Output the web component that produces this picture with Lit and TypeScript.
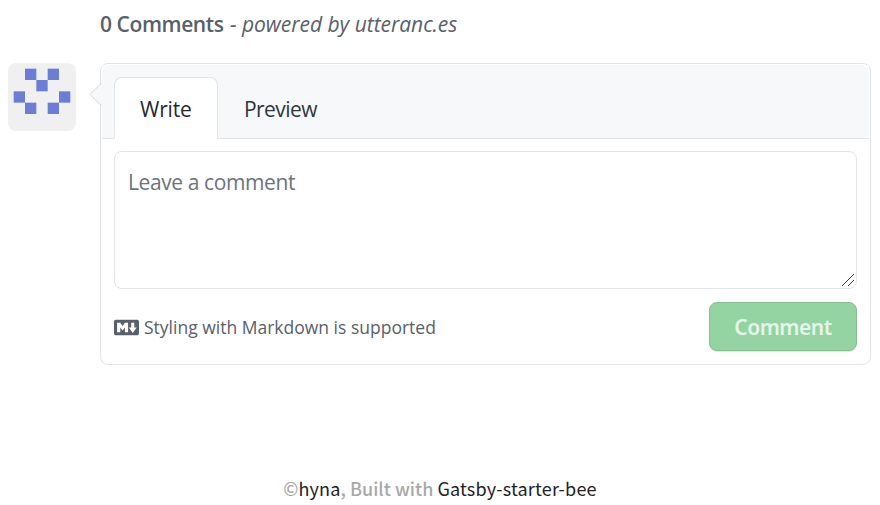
import { LitElement, html, css, svg } from "lit";
import { customElement } from "lit/decorators.js";

const CELLS = [[1, 0], [3, 0], [2, 1], [0, 2], [4, 2], [1, 3], [3, 3]];

@customElement("user-avatar")
class UserAvatar extends LitElement {
  static styles = css`
    :host { display: block; width: 68px; height: 68px; border-radius: 8px; overflow: hidden; background: #f0f0f0; }
    svg { display: block; }
  `;
  render() {
    return html`<svg width="68" height="68" viewBox="0 0 420 420">
      ${CELLS.map(([x, y]) => svg`<rect x=${35 + x * 70} y=${35 + y * 70} width="70" height="70" fill="#6c7dd6"></rect>`)}
    </svg>`;
  }
}

@customElement("app-root")
class AppRoot extends LitElement {
  static styles = css`
    * { box-sizing: border-box; }
    :host { display: block; width: 880px; height: 505px; overflow: hidden; background: #fff; color: #24292e; font-family: "Open Sans", "Noto Sans", sans-serif; }
    .title { margin: 0 0 0 100px; height: 63px; padding-top: 8px; font-size: 21px; line-height: 33px; color: #586069; font-weight: 400; white-space: nowrap; }
    .title em, .title strong { display: inline-block; }
    .title strong { font-weight: 600; width: 130px; letter-spacing: -0.42px; }
    .title em { letter-spacing: -0.03px; }
    .row { display: flex; gap: 24px; padding-left: 8px; }
    .card { position: relative; width: 771px; height: 302px; border: 1px solid #e1e4e8; border-radius: 8px; padding: 1px; background: #fff; }
    .arrow { position: absolute; left: -12px; top: 18px; }
    .head { height: 74px; padding: 12px 0 0 12px; display: flex; background: #f6f8fa; border-bottom: 1px solid #e1e4e8; border-radius: 7px 7px 0 0; font-size: 21px; line-height: 30px; color: #2f363d; }
    .tab { height: 62px; width: 104px; padding: 17px 0 0 26px; }
    .tab.on { background: #fff; border: 1px solid #e1e4e8; border-bottom: 0; border-radius: 8px 8px 0 0; padding: 16px 0 0 25px; color: #24292e; }
    .write { letter-spacing: -0.2px; }
    .preview { letter-spacing: -0.55px; }
    .box { position: relative; margin: 12px 12px 0 12px; width: 743px; height: 138px; border: 1px solid #e1e4e8; border-radius: 8px; padding: 15px 13px; font-size: 21px; line-height: 30px; color: #6a737d; letter-spacing: -0.4px; }
    .grip { position: absolute; right: 1px; bottom: 1px; }
    .foot { display: flex; align-items: center; justify-content: space-between; margin: 13px 12px 0; height: 49px; }
    .md { display: flex; align-items: center; gap: 5px; font-size: 17.5px; color: #586069; letter-spacing: 0; }
    .md svg { display: block; margin: 2px 0 0; }
    button { width: 148px; height: 49px; border: 1px solid #84c093; border-radius: 8px; background: #94d3a2; color: #e4f5e8; font: 600 21px "Noto Sans", "Open Sans", sans-serif; letter-spacing: -0.5px; padding: 1px 0 0; box-shadow: 0 1px 1px rgba(27, 31, 35, 0.12); }
    footer { margin-top: 109px; text-align: center; font: 500 18px/28px "Noto Sans CJK KR", sans-serif; color: #a8a8a8; white-space: nowrap; }
    footer b { font-weight: 400; color: #222; letter-spacing: 0.2px; }
  `;
  render() {
    return html`
      <h1 class="title"><strong>0 Comments</strong><em>- powered by utteranc.es</em></h1>
      <div class="row">
        <user-avatar></user-avatar>
        <section class="card">
          <svg class="arrow" width="13" height="26" viewBox="0 0 13 26">
            <path d="M13 1L1 12.5L13 24Z" fill="#f6f8fa"></path>
            <path d="M12.5 1L1 12.5L12.5 24" fill="none" stroke="#d1d5da"></path>
          </svg>
          <div class="head">
            <div class="tab on"><span class="write">Write</span></div>
            <div class="tab"><span class="preview">Preview</span></div>
          </div>
          <div class="box"><span class="hint">Leave a comment</span>
            <svg class="grip" width="14" height="14" viewBox="0 0 14 14" stroke="#444" stroke-width="1"><path d="M1 13L13 1M7 13L13 7"></path></svg>
          </div>
          <div class="foot">
            <div class="md">
              <svg width="25" height="25" viewBox="0 0 16 16" fill="#586069"><path fill-rule="evenodd" d="M14.85 3H1.15C.52 3 0 3.52 0 4.15v7.69C0 12.48.52 13 1.15 13h13.69c.64 0 1.15-.52 1.15-1.15v-7.7C16 3.52 15.48 3 14.85 3zM9 11H7V8L5.5 9.92 4 8v3H2V5h2l1.5 2L7 5h2v6zm2.99.5L9.5 8H11V5h2v3h1.5l-2.51 3.5z"></path></svg>
              <span class="mdtext">Styling with Markdown is supported</span>
            </div>
            <button>Comment</button>
          </div>
        </section>
      </div>
      <footer>©<b>hyna</b>, Built with <b>Gatsby-starter-bee</b></footer>
    `;
  }
}
